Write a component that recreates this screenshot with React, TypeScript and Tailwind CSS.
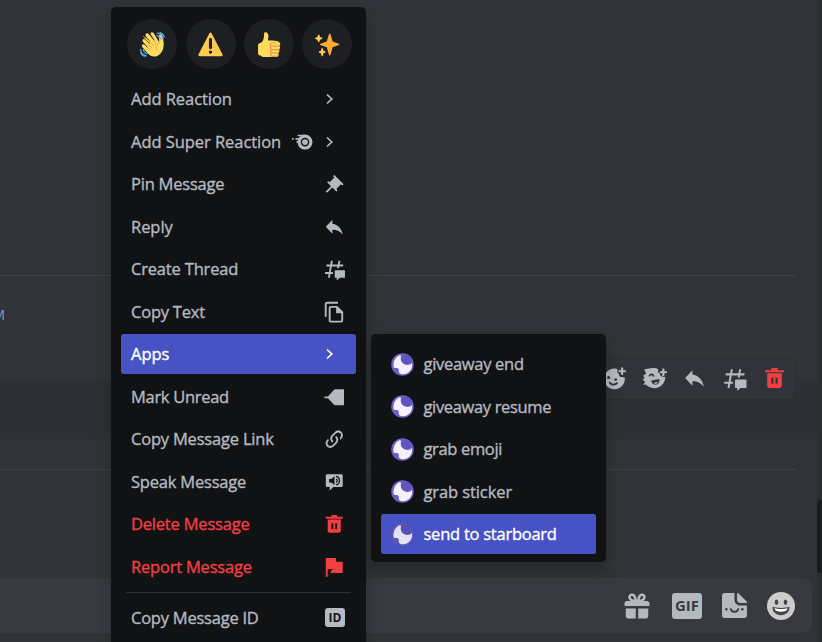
import React, { useId } from 'react';

type IconProps = { className?: string };

const font = "font-['Open_Sans','Noto_Sans',sans-serif]";

/* ---------- Emoji ---------- */

function WaveEmoji() {
  return (
    <svg viewBox="0 0 36 36" className="size-[25px]">
      <path
        fill="#FFDB5E"
        d="M5.2 8.4c1.1-1.1 2.6-.9 3.7.2l5.5 5.6.5-.4-6.300-7.500c-1-1.200-1-2.900.2-3.800 1.200-.9 2.700-.6 3.700.5l7.700 9.200.7-.4-5.200-7.900c-.8-1.200-.6-2.600.5-3.300 1.200-.7 2.600-.2 3.400 1l7.800 12.800c.5-2.500.1-4.700-.3-6.900-.4-2.100.6-3.600 2.300-3.800 1.500-.1 2.300.8 2.800 2.400 1.200 4 2.300 8.400 1.800 13.800-.5 6.300-3.400 11.600-8.500 14.200-5.200 2.600-10.700.9-14.300-3L3.500 21.800c-1-1.100-1.300-2.600-.2-3.600 1-.9 2.300-.7 3.300.2l4.300 4.100.5-.5-6.900-7.600c-1.100-1.200-1.300-2.700-.3-3.700 1-.9 2.500-.7 3.500.4l6.200 6 .4-.5-8.900-8.700c-1-1-1-1.900-.2-2.700z"
      />
      <g fill="none" stroke="#EE9547" strokeWidth="1.200" strokeLinecap="round">
        <path d="M10.900 22.500l3 2.700M11.600 17.500l5 5M14.700 14.400l5.100 5.500M19.800 12.400l3.500 5M28 15.300c-5.400 2.700-6.100 8-3.600 11" />
      </g>
      <g fill="none" stroke="#5DADEC" strokeWidth="1.800" strokeLinecap="round">
        <path d="M25 1.500c4 .2 7.500 3.800 8.200 8M29 1c3 1 5 3.200 6 6M24.500 5.200c2.800.5 4.800 2.400 5.600 5" />
        <path d="M1 25c.2 4.500 3.400 8.500 8 9.300M5 25.500c.3 2.600 2 4.700 4.600 5.500M.800 29.500c1 2.600 3 4.500 5.400 5.500" />
      </g>
    </svg>
  );
}

function WarningEmoji() {
  return (
    <svg viewBox="0 0 36 36" className="size-[25px]">
      <path fill="#FFCC4D" d="M2.653 35C.811 35-.001 33.662.847 32.027L16.456 1.972c.849-1.635 2.238-1.635 3.087 0l15.609 30.056c.85 1.634.037 2.972-1.805 2.972H2.653z" />
      <path fill="#231F20" d="M15.583 28.953c0-1.333 1.085-2.418 2.419-2.418 1.333 0 2.418 1.085 2.418 2.418 0 1.334-1.086 2.419-2.418 2.419-1.334 0-2.419-1.085-2.419-2.419zm.186-18.293c0-1.302.961-2.108 2.232-2.108 1.241 0 2.233.837 2.233 2.108v11.938c0 1.271-.992 2.108-2.233 2.108-1.271 0-2.232-.807-2.232-2.108V10.66z" />
    </svg>
  );
}

function ThumbEmoji() {
  return (
    <svg viewBox="0 0 36 36" className="size-[25px]">
      <path fill="#FFDB5E" d="M34.956 17.916c0-.503-.12-.975-.321-1.404-1.341-4.326-7.619-4.01-16.549-4.221-1.493-.035-.639-1.798-.115-5.668.341-2.517-1.282-6.382-4.01-6.382-4.498 0-.171 3.548-4.148 12.322-2.125 4.688-6.875 2.062-6.875 6.771v10.719c0 1.833.18 3.595 2.758 3.885C8.195 34.219 7.633 36 11.238 36h18.044c1.838 0 3.333-1.496 3.333-3.334 0-.762-.267-1.456-.698-2.018 1.02-.571 1.72-1.649 1.72-2.899 0-.76-.266-1.454-.696-2.015 1.023-.57 1.725-1.649 1.725-2.901 0-.909-.368-1.733-.961-2.336.757-.611 1.251-1.535 1.251-2.581z" />
      <path fill="#EE9547" d="M23.02 21.249h8.604c1.17 0 2.268-.626 2.866-1.633.246-.415.109-.952-.307-1.199-.415-.247-.952-.108-1.199.307-.283.479-.806.775-1.361.775h-8.81c-.873 0-1.583-.71-1.583-1.583s.71-1.583 1.583-1.583H28.7c.483 0 .875-.392.875-.875s-.392-.875-.875-.875h-5.888c-1.838 0-3.333 1.495-3.333 3.333 0 1.025.475 1.932 1.205 2.544-.615.605-.998 1.445-.998 2.373 0 1.028.478 1.938 1.212 2.549-.611.604-.99 1.441-.99 2.367 0 1.12.559 2.108 1.409 2.713-.524.589-.852 1.356-.852 2.204 0 1.838 1.495 3.333 3.333 3.333h5.484c1.17 0 2.269-.625 2.867-1.632.247-.415.11-.952-.305-1.199-.416-.245-.953-.11-1.199.305-.285.479-.808.776-1.363.776h-5.484c-.873 0-1.583-.71-1.583-1.583s.71-1.583 1.583-1.583h6.506c1.17 0 2.27-.626 2.867-1.633.247-.416.11-.953-.305-1.199-.419-.251-.954-.11-1.199.305-.289.487-.799.777-1.363.777h-7.063c-.873 0-1.583-.711-1.583-1.584s.71-1.583 1.583-1.583h8.091c1.17 0 2.269-.625 2.867-1.632.247-.415.11-.952-.305-1.199-.417-.246-.953-.11-1.199.305-.289.486-.799.776-1.363.776H23.02c-.873 0-1.583-.71-1.583-1.583s.71-1.584 1.583-1.584z" />
    </svg>
  );
}

function SparklesEmoji() {
  return (
    <svg viewBox="0 0 36 36" className="size-[25px]">
      <path fill="#FFAC33" d="M34.347 16.893l-8.899-3.294-3.323-10.891c-.128-.42-.517-.708-.956-.708-.439 0-.828.288-.956.708l-3.322 10.891-8.9 3.294c-.393.146-.653.519-.653.938 0 .418.26.793.653.938l8.895 3.293 3.324 11.223c.126.424.516.715.959.715.442 0 .833-.291.959-.716l3.324-11.223 8.896-3.293c.391-.144.652-.518.652-.937 0-.418-.261-.792-.653-.938z" />
      <path fill="#FFCC4D" d="M14.469 27.894l-2.314-.856-.9-3.3c-.118-.436-.513-.738-.964-.738-.451 0-.846.302-.965.737l-.9 3.3-2.313.856c-.393.145-.653.52-.653.938 0 .418.26.793.653.938l2.301.853.907 3.622c.112.444.511.756.97.756.459 0 .858-.312.97-.757l.907-3.622 2.301-.853c.393-.144.653-.519.653-.937 0-.418-.26-.793-.653-.937z" />
      <path fill="#FFCC4D" d="M10 8.200l-2.700-1-1-2.900c-.150-.400-.500-.700-.950-.700s-.800.300-.950.700l-1 2.900-2.700 1c-.400.150-.650.500-.650.950s.250.800.650.950l2.700 1 1 2.900c.150.400.500.650.950.650s.800-.250.950-.650l1-2.900 2.700-1c.400-.150.650-.500.650-.950s-.250-.800-.650-.950z" />
    </svg>
  );
}

/* ---------- Interface icons ---------- */

function PinIcon({ className }: IconProps) {
  return (
    <svg viewBox="0 0 24 24" fill="currentColor" className={className}>
      <path d="M22 12L12.101 2.101L10.686 3.514L12.101 4.929L7.151 9.878L5.736 8.465L4.322 9.88L8.565 14.122L2.908 19.778L4.322 21.192L9.979 15.536L14.222 19.778L15.636 18.364L14.222 16.95L19.171 12L20.586 13.414L22 12Z" />
    </svg>
  );
}

function ReplyIcon({ className }: IconProps) {
  return (
    <svg viewBox="0 0 24 24" fill="currentColor" className={className}>
      <path d="M10 8.267V4L3 11.467L10 18.933V14.56C15 14.56 18.5 16.267 21 20C20 14.667 17 9.333 10 8.267Z" />
    </svg>
  );
}

function ThreadIcon({ className }: IconProps) {
  return (
    <svg viewBox="0 0 24 24" fill="currentColor" className={className}>
      <path d="M5.433 21C5.358 21 5.302 20.933 5.315 20.859L6 17H2.143C2.068 17 2.012 16.933 2.025 16.859L2.333 15.099C2.343 15.042 2.392 15 2.451 15H6.35L7.41 9H3.553C3.478 9 3.422 8.933 3.435 8.859L3.743 7.099C3.753 7.042 3.802 7 3.861 7H7.76L8.452 3.099C8.463 3.042 8.512 3 8.57 3H10.327C10.401 3 10.458 3.067 10.445 3.141L9.76 7H15.76L16.452 3.099C16.463 3.042 16.512 3 16.571 3H18.327C18.401 3 18.458 3.067 18.445 3.141L17.76 7H21.617C21.692 7 21.748 7.067 21.735 7.141L21.427 8.901C21.417 8.958 21.367 9 21.309 9H17.41L17.05 11.04H15.05L15.41 9H9.41L8.35 15H10.56V17H8L7.307 20.901C7.297 20.958 7.248 21 7.189 21H5.433Z" />
      <path d="M13.44 12.96C12.91 12.96 12.48 13.39 12.48 13.92V20.221C12.48 20.751 12.91 21.181 13.44 21.181H14.4C14.533 21.181 14.64 21.289 14.64 21.421V23.46C14.64 23.668 14.887 23.777 15.041 23.638L17.486 21.429C17.662 21.27 17.892 21.181 18.129 21.181H22.56C23.09 21.181 23.52 20.751 23.52 20.221V13.92C23.52 13.39 23.09 12.96 22.56 12.96H13.44Z" />
    </svg>
  );
}

function CopyIcon({ className }: IconProps) {
  return (
    <svg viewBox="0 0 24 24" fill="none" stroke="currentColor" className={className}>
      <path strokeWidth="2" d="M2.900 16.800V3.200Q2.900 1.800 4.300 1.800H16" />
      <path strokeWidth="2" strokeLinejoin="round" d="M8 6.300H14.800L20.500 12V20.900Q20.500 22 19.400 22H8.200Q7.100 22 7.100 20.900V7.300Q7.100 6.300 8 6.300Z" />
      <path fill="currentColor" stroke="none" d="M14 5.800V13H21.300L14 5.800Z" />
    </svg>
  );
}

function UnreadIcon({ className }: IconProps) {
  return (
    <svg viewBox="0 0 24 24" fill="currentColor" className={className}>
      <path d="M1.500 11.100H5.300L11.500 4.200Q12.200 3.500 13.200 3.500H21.600Q22.400 3.500 22.400 4.300V19.700Q22.400 20.500 21.600 20.500H13.200Q12.200 20.500 11.500 19.800L5.300 13H1.500Z" />
    </svg>
  );
}

function LinkIcon({ className }: IconProps) {
  return (
    <svg viewBox="0 0 24 24" fill="currentColor" className={className}>
      <path d="M10.59,13.41C11,13.8 11,14.44 10.59,14.83C10.2,15.22 9.56,15.22 9.17,14.83C7.22,12.88 7.22,9.71 9.17,7.76L12.71,4.22C14.66,2.27 17.83,2.27 19.78,4.22C21.73,6.17 21.73,9.34 19.78,11.29L18.29,12.78C18.3,11.96 18.17,11.14 17.89,10.36L18.36,9.88C19.54,8.71 19.54,6.81 18.36,5.64C17.19,4.46 15.29,4.46 14.12,5.64L10.59,9.17C9.41,10.34 9.41,12.24 10.59,13.41M13.41,9.17C13.8,8.78 14.44,8.78 14.83,9.17C16.78,11.12 16.78,14.29 14.83,16.24L11.29,19.78C9.34,21.73 6.17,21.73 4.22,19.78C2.27,17.83 2.27,14.66 4.22,12.71L5.71,11.22C5.7,12.04 5.83,12.86 6.11,13.65L5.64,14.12C4.46,15.29 4.46,17.19 5.64,18.36C6.81,19.54 8.71,19.54 9.88,18.36L13.41,14.83C14.59,13.66 14.59,11.76 13.41,10.59C13,10.2 13,9.56 13.41,9.17Z" />
    </svg>
  );
}

function SpeakIcon({ className }: IconProps) {
  return (
    <svg viewBox="0 0 24 24" className={className}>
      <path fill="currentColor" d="M4.200 3.500H19.800Q21 3.500 21 4.700V15.800Q21 17 19.800 17H11L7.200 20.800V17H4.200Q3 17 3 15.800V4.700Q3 3.500 4.200 3.500Z" />
      <path fill="#111214" d="M6.500 8.600H8.800L12.200 5.700V15L8.800 12.200H6.500Z" />
      <path fill="none" stroke="#111214" strokeWidth="1.300" d="M13.800 5.800C18.800 6.500 18.800 14.200 13.800 14.900M13.800 8.500C15.700 9 15.700 11.700 13.800 12.200" />
    </svg>
  );
}

function TrashIcon({ className }: IconProps) {
  return (
    <svg viewBox="0 0 24 24" fill="currentColor" className={className}>
      <path d="M15 4V2H9V4H3V6H21V4H15Z" />
      <path d="M5 7V19C5 20.1 5.9 21 7 21H17C18.1 21 19 20.1 19 19V7H5ZM11 17H9V11H11V17ZM15 17H13V11H15V17Z" />
    </svg>
  );
}

function FlagIcon({ className }: IconProps) {
  return (
    <svg viewBox="0 0 24 24" fill="currentColor" className={className}>
      <path d="M20 6H14V3C14 2.45 13.553 2 13 2H4C3.447 2 3 2.45 3 3V22H5V14H10.586L8.293 16.295C8.007 16.581 7.922 17.011 8.076 17.385C8.23 17.759 8.596 18 9 18H20C20.553 18 21 17.554 21 17V7C21 6.45 20.553 6 20 6Z" />
    </svg>
  );
}

function ChevronIcon({ className }: IconProps) {
  return (
    <svg viewBox="0 0 10 12" fill="none" stroke="currentColor" className={className}>
      <path strokeWidth="1.700" d="M2 1.500L6.800 6L2 10.500" />
    </svg>
  );
}

function SuperIcon({ className }: IconProps) {
  return (
    <svg viewBox="0 0 22 16" fill="none" stroke="currentColor" className={className}>
      <circle cx="13" cy="8.100" r="5.900" strokeWidth="3.200" />
      <circle cx="13" cy="8.100" r="2.900" fill="currentColor" stroke="none" />
      <path strokeWidth="1.700" d="M5.500 1.500H13M3.500 4.800H9M0 4.800H1.600M4.500 7.800H7" />
    </svg>
  );
}

function IdIcon() {
  return (
    <span className="mr-[1px] flex h-[19px] w-5 items-center justify-center rounded-[3px] bg-[#b5bac1] text-[12px] leading-none font-bold text-[#111214] [-webkit-text-stroke:0px]">
      ID
    </span>
  );
}

function AddReactionIcon({ className }: IconProps) {
  return (
    <svg viewBox="0 0 24 24" className={className}>
      <path fill="currentColor" d="M12 2.500C13.200 2.500 14.200 2.700 15.100 3C14 5 14.800 6.900 16.300 7.400C15.700 9.500 17.700 11.600 21.800 10.700C22.700 17 18 22.300 12 22.300C6.500 22.300 2 17.900 2 12.400C2 6.900 6.500 2.500 12 2.500Z" />
      <g fill="#313338">
        <circle cx="6.300" cy="11" r="1.500" />
        <circle cx="13.200" cy="13" r="1.300" />
      </g>
      <path fill="none" stroke="#313338" strokeWidth="1.800" strokeLinecap="round" d="M7.500 16C9 18.300 12.500 18.500 14.500 16.500" />
      <path fill="none" stroke="currentColor" strokeWidth="2" d="M19.300 1.500V8.500M15.800 5H22.800" />
    </svg>
  );
}

function AddSuperReactionIcon({ className }: IconProps) {
  return (
    <svg viewBox="0 0 24 24" className={className}>
      <path fill="currentColor" d="M2.200 3.200L8.500 2.200C11 1.500 14 2 15.600 3.200C14.900 5.200 15.700 6.700 17 7.300C17.200 9.600 19 10.800 22.300 10.400C22.500 16.800 17.500 21.600 11.500 21.300C8 21.200 5.500 19.800 3.800 17.800L1 18L3 15.400L.500 12.500L2.600 12L1.200 9L4 7.400Z" />
      <path fill="none" stroke="#313338" strokeWidth="1.600" strokeLinecap="round" d="M7.200 9.200C8 7.600 10.300 7.600 11 9.500" />
      <path fill="#313338" d="M9 13.800L16.600 12.400C17.300 16.200 14.700 18.500 11.800 17.700C10 17.200 9 15.700 9 13.800Z" />
      <path fill="currentColor" d="M11.300 16.300C12.700 15 14.500 15 15.400 15.800C14.300 17.400 12.700 17.500 11.300 16.300Z" />
      <path fill="none" stroke="currentColor" strokeWidth="2" d="M20.500 2.500V9.500M17 6H24" />
    </svg>
  );
}

function GiftIcon({ className }: IconProps) {
  return (
    <svg viewBox="0 0 24 24" fill="currentColor" className={className}>
      <path fillRule="evenodd" d="M16.886 8H20C21.104 8 22 8.896 22 10V12H2V10C2 8.896 2.897 8 4 8H7.114C6.663 7.764 6.236 7.477 5.879 7.121C4.709 5.951 4.709 4.048 5.879 2.879C7.012 1.746 8.986 1.745 10.121 2.877C11.758 4.514 11.979 7.595 11.998 7.941L12 8L12.002 7.94C12.022 7.594 12.242 4.515 13.879 2.878C15.014 1.745 16.986 1.746 18.121 2.877C19.29 4.049 19.29 5.952 18.121 7.121C17.764 7.477 17.337 7.764 16.886 8ZM7.293 5.707C6.903 5.316 6.903 4.682 7.293 4.292C7.481 4.103 7.732 4 8 4C8.268 4 8.519 4.103 8.707 4.292C9.297 4.882 9.641 5.94 9.825 6.822C8.945 6.639 7.879 6.293 7.293 5.707ZM14.174 6.824C14.359 5.941 14.702 4.883 15.293 4.293C15.481 4.103 15.732 4 16 4C16.268 4 16.519 4.103 16.706 4.291C17.096 4.682 17.097 5.316 16.707 5.707C16.116 6.298 15.057 6.642 14.174 6.824ZM3 14V20C3 21.102 3.897 22 5 22H11V14H3ZM13 14V22H19C20.104 22 21 21.102 21 20V14H13Z" />
    </svg>
  );
}

function StickerIcon({ className }: IconProps) {
  return (
    <svg viewBox="0 0 20 20" className={className}>
      <path fill="currentColor" d="M12 .663V5.402C12 6.84 13.16 8 14.6 8H19.34C19.925 8 20.222 7.296 19.806 6.879L13.121.197C12.704-.22 12 .076 12 .663ZM14.576 10.028C12.034 10.028 9.97 7.964 9.97 5.422V0H1.994C.897 0 0 .897 0 1.994V17.946C0 19.042.897 19.94 1.994 19.94H17.946C19.042 19.94 19.94 19.042 19.94 17.946V10.028H14.576Z" />
      <circle cx="3.500" cy="13" r="1" fill="#383a40" />
      <circle cx="16.300" cy="13" r="1" fill="#383a40" />
      <path fill="none" stroke="#383a40" strokeWidth="1.500" d="M6.800 12.300C7.500 16 12.400 16 13.200 12.300" />
    </svg>
  );
}

function GrinIcon({ className }: IconProps) {
  return (
    <svg viewBox="0 0 28 28" className={className}>
      <circle cx="14" cy="14" r="14" fill="#cccccc" />
      <ellipse cx="9.500" cy="10.300" rx="1.800" ry="2.700" fill="#45464a" />
      <ellipse cx="18.500" cy="10.300" rx="1.800" ry="2.700" fill="#45464a" />
      <path fill="#45464a" d="M5.500 14.800C9 16.300 19 16.300 22.500 14.800C22.800 20 19 23.200 14 23.200C9 23.200 5.200 20 5.500 14.800Z" />
      <path fill="#fff" d="M7.300 16.300C11 17.200 17 17.200 20.700 16.300C20 19 17.500 19.800 14 19.800C10.500 19.800 8 19 7.300 16.300Z" />
    </svg>
  );
}

function MoonAvatar({ active }: { active?: boolean }) {
  const id = useId();
  const base = active ? '#5f57b5' : '#6a60c8';
  return (
    <svg viewBox="0 0 24 24" className={active ? 'size-[23px] opacity-90' : 'size-[23px]'}>
      <clipPath id={id}>
        <circle cx="12" cy="12" r="11.800" />
      </clipPath>
      <g clipPath={`url(#${id})`}>
        <rect width="24" height="24" fill={base} />
        <path
          fill="#f7f1fd"
          d="M8 2.800C4 4.800 2 9.500 2.800 15C4 15.800 5.200 15.300 6.500 15.700C8.200 16.300 8.500 17.700 8 19C8.300 21.200 10 22.300 12.500 22.300C18.500 22.300 23 17 22 10.500C20.500 12.300 17.500 13 14.800 12C11 10.800 9.200 6.800 10.600 3.200C9.800 2.300 8.800 2.300 8 2.800Z"
        />
        <circle cx="15.800" cy="6.700" r="5" fill={active ? '#5850b1' : '#5f54c0'} />
      </g>
    </svg>
  );
}

/* ---------- Menus ---------- */

type Item = {
  label: string;
  tracking: string;
  icon: React.ReactNode;
  tone?: 'danger' | 'active';
};

const iconSize = 'mr-[0.75px] size-[22.5px]';
const chevron = <ChevronIcon className="mr-[11px] h-3 w-2.5" />;

const items: Item[] = [
  { label: 'Add Reaction', tracking: 'tracking-[-0.05px]', icon: chevron },
  {
    label: 'Add Super Reaction',
    tracking: 'tracking-[-0.05px]',
    icon: (
      <span className="flex items-center gap-[11px]">
        <SuperIcon className="h-4 w-[22px]" />
        {chevron}
      </span>
    ),
  },
  { label: 'Pin Message', tracking: 'tracking-[-0.22px]', icon: <PinIcon className={iconSize} /> },
  { label: 'Reply', tracking: 'tracking-[-0.05px]', icon: <ReplyIcon className={iconSize} /> },
  { label: 'Create Thread', tracking: 'tracking-[-0.18px]', icon: <ThreadIcon className={iconSize} /> },
  { label: 'Copy Text', tracking: 'tracking-[-0.22px]', icon: <CopyIcon className={iconSize} /> },
  { label: 'Apps', tracking: 'tracking-[0px]', icon: chevron, tone: 'active' },
  { label: 'Mark Unread', tracking: 'tracking-[-0.3px]', icon: <UnreadIcon className={iconSize} /> },
  { label: 'Copy Message Link', tracking: 'tracking-[-0.2px]', icon: <LinkIcon className={iconSize} /> },
  { label: 'Speak Message', tracking: 'tracking-[-0.2px]', icon: <SpeakIcon className={iconSize} /> },
  { label: 'Delete Message', tracking: 'tracking-[-0.2px]', icon: <TrashIcon className={iconSize} />, tone: 'danger' },
  { label: 'Report Message', tracking: 'tracking-[-0.2px]', icon: <FlagIcon className={iconSize} />, tone: 'danger' },
];

const tones = {
  normal: 'text-[#b5bac1]',
  danger: 'text-[#f23f42]',
  active: 'bg-[#4752c4] text-white',
};

function MenuRow({ item }: { item: Item }) {
  return (
    <div className={`flex h-10 shrink-0 items-center justify-between rounded-[2.500px] px-2.5 leading-6 ${tones[item.tone ?? 'normal']}`}>
      <span className={`whitespace-nowrap ${item.tracking}`}>{item.label}</span>
      {item.icon}
    </div>
  );
}

function ContextMenu() {
  const emoji = [WaveEmoji, WarningEmoji, ThumbEmoji, SparklesEmoji];
  return (
    <div className="absolute top-[7px] left-[111px] flex h-[660px] w-[255px] flex-col rounded-[5px] bg-[#111214] px-2.5 shadow-[0_8px_16px_rgba(0,0,0,0.24)] [-webkit-text-stroke:0.35px]">
      <div className="flex justify-between pt-3 pr-[3.750px] pl-[6.250px]">
        {emoji.map((Emoji, i) => (
          <div key={i} className="flex size-[50px] items-center justify-center rounded-full bg-[#1e1f22]">
            <Emoji />
          </div>
        ))}
      </div>
      <div className="mt-[10.250px] flex flex-col gap-[2.500px]">
        {items.map((item) => (
          <MenuRow key={item.label} item={item} />
        ))}
      </div>
      <div className="mx-[5px] mt-[5px] mb-[5px] h-px shrink-0 bg-[#2e2f34]" />
      <MenuRow item={{ label: 'Copy Message ID', tracking: 'tracking-[-0.23px]', icon: <IdIcon /> }} />
    </div>
  );
}

const apps = [
  { label: 'giveaway end', tracking: 'tracking-[-0.3px]' },
  { label: 'giveaway resume', tracking: 'tracking-[-0.35px]' },
  { label: 'grab emoji', tracking: 'tracking-[-0.35px]' },
  { label: 'grab sticker', tracking: 'tracking-[-0.1px]' },
  { label: 'send to starboard', tracking: 'tracking-[-0.25px]' },
];

function AppsMenu() {
  return (
    <div className="absolute top-[334px] left-[371px] flex h-[228px] w-[235px] flex-col gap-[2.500px] rounded-[5px] bg-[#111214] p-2.5 pt-[10.250px] shadow-[0_8px_16px_rgba(0,0,0,0.24)] [-webkit-text-stroke:0.35px]">
      {apps.map((app, i) => (
        <div
          key={app.label}
          className={`flex h-10 shrink-0 items-center gap-[9.500px] rounded-[2.500px] px-2.5 leading-6 ${i === 4 ? tones.active : tones.normal}`}
        >
          <MoonAvatar active={i === 4} />
          <span className={`whitespace-nowrap ${app.tracking}`}>{app.label}</span>
        </div>
      ))}
    </div>
  );
}

/* ---------- Chat behind the menus ---------- */

function MessageToolbar() {
  return (
    <div className="absolute -top-[21px] right-[21px] flex h-[42px] items-center gap-[15px] rounded-[5px] border border-[#2b2d31] bg-[#313338] px-2 pb-px text-[#b5bac1]">
      <AddReactionIcon className="size-[25px]" />
      <AddSuperReactionIcon className="size-[25px]" />
      <ReplyIcon className="size-[25px]" />
      <ThreadIcon className="size-[25px]" />
      <TrashIcon className="size-[25px] text-[#f23f42]" />
    </div>
  );
}

export default function App() {
  return (
    <div className={`relative flex h-[642px] w-[822px] overflow-hidden bg-[#313338] text-[16.500px] font-medium ${font}`}>
      <div className="flex w-[817px] flex-col">
        <div className="mr-[21px] h-[276px] shrink-0 border-b border-[#3f4147]" />
        <div className="h-[103px] shrink-0 pt-[30px]">
          <span className="-ml-[7.500px] block text-[14px] leading-[18px] text-[#7f97c4]">M</span>
        </div>
        <div className="relative h-[60px] shrink-0 bg-[#2e3035]">
          <MessageToolbar />
        </div>
        <div className="mr-[21px] h-[31px] shrink-0 border-b border-[#3f4147]" />
        <div className="h-[108px] shrink-0" />
        <div className="mr-[5px] flex h-[55px] shrink-0 items-center justify-end rounded-r-[10px] bg-[#383a40] pr-[17px] text-[#b5bac1]">
          <GiftIcon className="size-[30px]" />
          <div className="ml-5 flex h-[26px] w-[30px] items-center justify-center rounded-[3px] bg-[#b5bac1] text-[15px] leading-none font-bold text-[#383a40]">
            GIF
          </div>
          <StickerIcon className="ml-5 size-[25px]" />
          <GrinIcon className="ml-5 size-7" />
        </div>
      </div>
      <div className="flex w-[5px] flex-col bg-[#2b2d31] pt-[500px]">
        <div className="h-[73px] rounded-l-[4px] bg-[#1a1b1e]" />
      </div>
      <ContextMenu />
      <AppsMenu />
    </div>
  );
}
